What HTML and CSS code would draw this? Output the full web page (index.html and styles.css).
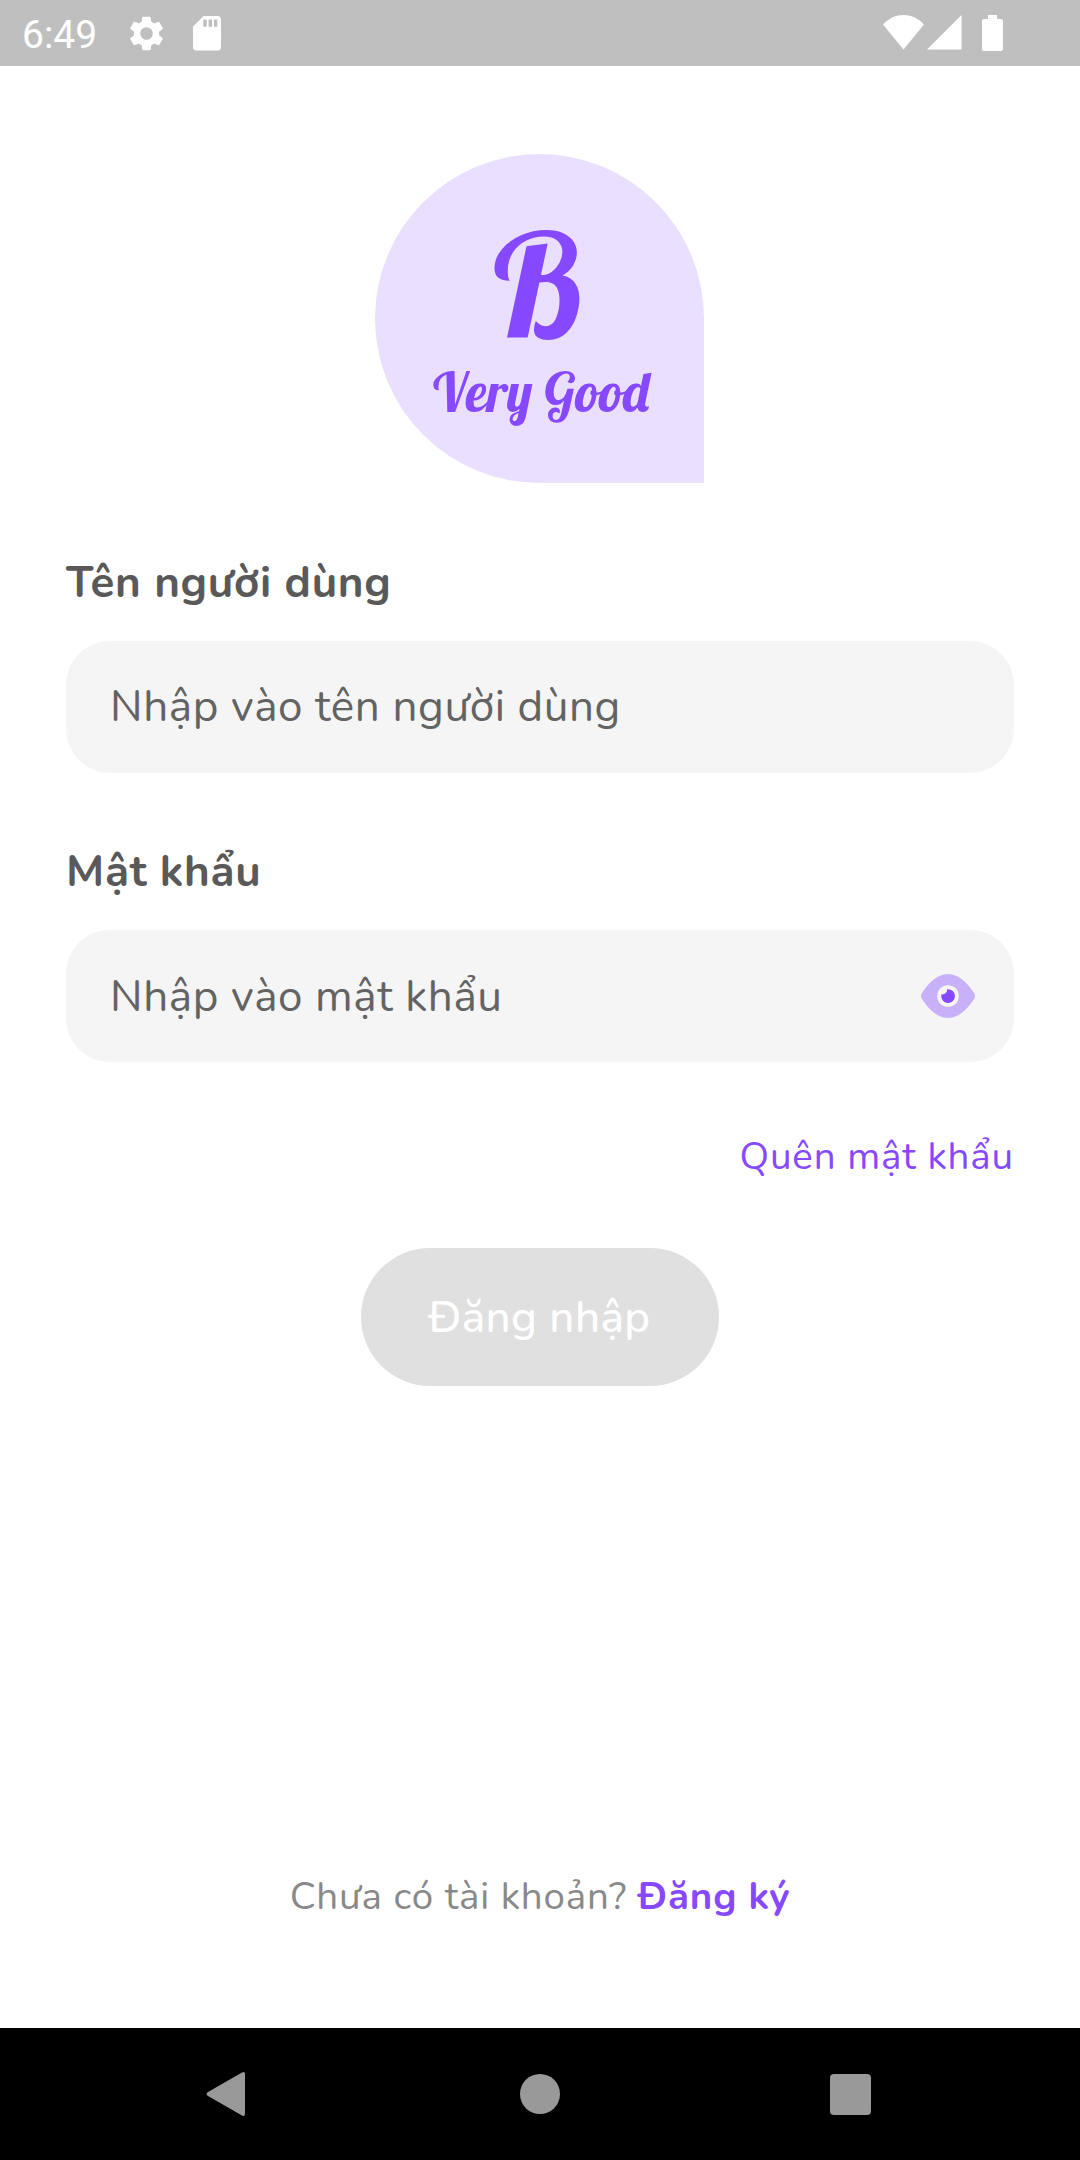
FILE: index.html
```html
<!DOCTYPE html>
<html lang="vi">
<head>
<meta charset="utf-8">
<title>Đăng nhập</title>
<link rel="stylesheet" href="styles.css">
</head>
<body>
<div class="screen">
  <header class="status-bar">
    <span class="clock">6:49</span>
    <svg class="gear" viewBox="2 2 20 20"><path fill-rule="evenodd" d="M19.14 12.94c.04-.3.06-.61.06-.94 0-.32-.02-.64-.07-.94l2.03-1.58a.49.49 0 0 0 .12-.61l-1.92-3.32a.49.49 0 0 0-.59-.22l-2.39.96c-.5-.38-1.03-.7-1.62-.94L14.4 2.81A.48.48 0 0 0 13.92 2.4h-3.84c-.24 0-.43.17-.47.41l-.36 2.54c-.59.24-1.13.57-1.62.94l-2.39-.96c-.22-.08-.47 0-.59.22L2.74 8.87c-.12.21-.08.47.12.61l2.03 1.58c-.05.3-.09.63-.09.94s.02.64.07.94l-2.03 1.58a.49.49 0 0 0-.12.61l1.92 3.32c.12.22.37.29.59.22l2.39-.96c.5.38 1.03.7 1.62.94l.36 2.54c.05.24.24.41.48.41h3.84c.24 0 .44-.17.47-.41l.36-2.54c.59-.24 1.13-.56 1.62-.94l2.39.96c.22.08.47 0 .59-.22l1.92-3.32c.12-.22.07-.47-.12-.61zM12 15.6A3.6 3.6 0 1 1 12 8.4a3.6 3.6 0 0 1 0 7.2z"/></svg>
    <svg class="sd" viewBox="0 0 28 35"><path fill-rule="evenodd" d="M10.5 0H24.5A3.5 3.5 0 0 1 28 3.500V31a3.500 3.500 0 0 1-3.500 3.500H3.500A3.500 3.500 0 0 1 0 31V10.500zM10.300 3.500v7.200h3.400V3.500zm5.300 0v7.200H19V3.500zm5.300 0v7.200h3.400V3.500z"/></svg>
    <div class="system-icons">
      <svg class="wifi" viewBox="0 0 41 35"><path d="M0 9.500C12-3.100 29-3.100 41 9.500L20.500 34.500z"/></svg>
      <svg class="signal" viewBox="0 0 35 35"><path d="M34.500 0v34.500H0z"/></svg>
      <svg class="battery" viewBox="0 0 21 36"><path d="M6 0h9v4h4a2 2 0 0 1 2 2v28a2 2 0 0 1-2 2H2a2 2 0 0 1-2-2V6a2 2 0 0 1 2-2h4z"/></svg>
    </div>
  </header>

  <main class="login">
    <div class="logo">
      <span class="logo-mark">B</span>
      <span class="logo-name">Very Good</span>
    </div>

    <label class="label">Tên người dùng</label>
    <div class="field"><span class="placeholder">Nhập vào tên người dùng</span></div>

    <label class="label">Mật khẩu</label>
    <div class="field">
      <span class="placeholder">Nhập vào mật khẩu</span>
      <svg class="eye" viewBox="0 0 54 44">
        <path fill="#c9b1f9" d="M1 19C7 9.500 16 0 27 0s20 9.500 26 19q2 3 0 6C47 34.500 38 44 27 44S7 34.500 1 25q-2-3 0-6z"/>
        <circle cx="27" cy="22" r="10.800" fill="#f5f5f5"/>
        <path fill="#8749ff" d="M26 15.300A6.900 6.900 0 1 1 20.400 20.300C23.500 21 26.800 18.300 26 15.300z"/>
      </svg>
    </div>

    <a class="forgot">Quên mật khẩu</a>
    <button class="submit" type="button">Đăng nhập</button>
    <p class="signup">Chưa có tài khoản? <a class="signup-link">Đăng ký</a></p>
  </main>

  <nav class="nav-bar">
    <svg class="nav-back" viewBox="0 0 40 46"><path d="M36 1.500Q39 0 39 3v40q0 3-3 1.500L2 25Q-1 23 2 21z"/></svg>
    <span class="nav-home"></span>
    <span class="nav-recent"></span>
  </nav>
</div>
</body>
</html>
```
FILE: styles.css
```css
* { box-sizing: border-box; }

body {
  margin: 0;
  background: #fff;
  font-family: Nunito, Lato, "Noto Sans", sans-serif;
}

svg { display: block; flex: none; }

.screen {
  display: flex;
  flex-direction: column;
  width: 1080px;
  height: 2160px;
}

/* Status bar */
.status-bar {
  display: flex;
  align-items: flex-start;
  height: 66px;
  padding: 16px 77px 0 22px;
  background: #bfbfbf;
  fill: #fff;
}
.clock {
  width: 107px;
  color: #fff;
  font: 400 39px/38px Roboto, sans-serif;
}
.gear { width: 35px; height: 35px; }
.sd { width: 28px; height: 35px; margin-left: 29px; }
.system-icons { display: flex; margin: -1px 0 0 auto; }
.wifi { width: 41px; height: 35px; }
.signal { width: 35px; height: 35px; margin-left: 3px; }
.battery { width: 21px; height: 36px; margin-left: 20px; }

/* Login form */
.login {
  flex: 1;
  display: flex;
  flex-direction: column;
  align-items: stretch;
  padding: 88px 66px 0;
}
.logo {
  align-self: center;
  display: flex;
  flex-direction: column;
  align-items: center;
  width: 329px;
  height: 329px;
  margin-right: 1px;
  padding-top: 60px;
  border-radius: 50% 50% 0 50%;
  background: #eadfff;
  color: #8749ff;
  font-family: Lobster, "Liberation Serif", cursive;
  white-space: nowrap;
}
.logo-mark { margin-right: 2px; font-size: 143px; line-height: 141px; }
.logo-name { margin-left: 3px; font-size: 54.2px; line-height: 75px; }

.label {
  margin-top: 69.5px;
  color: #595959;
  font-size: 44px;
  font-weight: 700;
  line-height: 60px;
  letter-spacing: 0.69px;
}

.field {
  display: flex;
  align-items: center;
  justify-content: space-between;
  height: 132px;
  margin-top: 28px;
  padding: 0 39px 0 44px;
  border-radius: 44px;
  background: #f5f5f5;
}
.placeholder {
  padding-top: 1px;
  color: #636363;
  font-size: 44px;
  line-height: 60px;
  letter-spacing: 0.6px;
}
.eye { width: 54px; height: 44px; }

.forgot {
  align-self: flex-end;
  margin-top: 69px;
  color: #8749ff;
  font-size: 38.5px;
  line-height: 52px;
  letter-spacing: 0.86px;
}
.submit {
  align-self: center;
  width: 358px;
  height: 138px;
  margin-top: 65px;
  padding: 1px 1px 0 0;
  border: 0;
  border-radius: 69px;
  background: #e0e0e0;
  color: #fff;
  font: 500 44px/60px Nunito, Lato, "Noto Sans", sans-serif;
  letter-spacing: 0.4px;
}
.signup {
  margin: auto 0 105px;
  color: #898989;
  font-size: 38.5px;
  line-height: 52px;
  letter-spacing: 0.82px;
  text-align: center;
}
.signup-link { color: #8749ff; font-weight: 700; }

/* System navigation */
.nav-bar {
  display: flex;
  align-items: center;
  justify-content: space-between;
  height: 132px;
  padding: 0 209px 0 206px;
  background: #000;
  fill: #999;
}
.nav-back { width: 40px; height: 46px; }
.nav-home { width: 40px; height: 40px; margin-left: 4px; border-radius: 50%; background: #999; }
.nav-recent { width: 41px; height: 41px; border-radius: 4px; background: #999; }
```
